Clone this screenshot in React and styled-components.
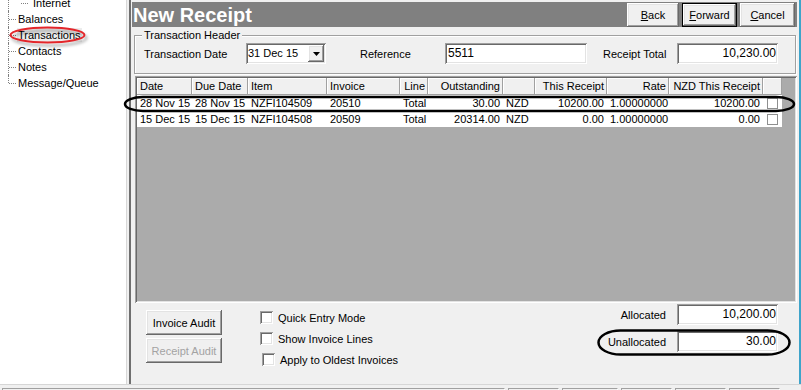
import React from 'react';
import styled, { createGlobalStyle, css } from 'styled-components';

const GlobalStyle = createGlobalStyle`
  html, body { margin: 0; padding: 0; background: #f0f0f0; }
  body {
    font-family: "Liberation Sans", Arial, sans-serif;
    font-size: 11px;
    color: #000;
  }
  *, *::before, *::after { box-sizing: border-box; }
`;

// classic 3d edges
const sunken = css`
  background: #fff;
  box-shadow: inset 1px 1px 0 #a0a0a0, inset -1px -1px 0 #fff,
    inset 2px 2px 0 #696969, inset -2px -2px 0 #e3e3e3;
`;

const raised = css`
  background: #f0f0f0;
  box-shadow: inset -1px -1px 0 #696969, inset 1px 1px 0 #fff,
    inset -2px -2px 0 #a0a0a0, inset 2px 2px 0 #e3e3e3;
`;

const Screen = styled.div`
  position: relative;
  width: 801px;
  height: 390px;
  overflow: hidden;
  display: flex;
  flex-direction: column;
  background: #f0f0f0;
`;

const Workspace = styled.div`
  display: flex;
  height: 384px;
`;

const TreePane = styled.nav`
  width: 127px;
  flex-shrink: 0;
  background: #fff;
  border-right: 1px solid #d8d8d8;
  overflow: hidden;
`;

const TreeList = styled.ul`
  list-style: none;
  margin: -5px 0 0 8px;
  padding: 0;
`;

const TreeNode = styled.li`
  position: relative;
  height: 16px;
  line-height: 16px;
  padding-left: ${p => (p.$child ? 24 : 9)}px;
  white-space: nowrap;
  &::before {
    content: '';
    position: absolute;
    left: 0;
    top: 0;
    height: ${p => (p.$last ? 8 : 16)}px;
    border-left: 1px dotted #808080;
  }
  &::after {
    content: '';
    position: absolute;
    left: ${p => (p.$child ? 13 : 1)}px;
    top: 8px;
    width: 7px;
    border-top: 1px dotted #808080;
  }
`;

const NodeLabel = styled.span`
  padding: 1px 1px;
  background: ${p => (p.$selected ? '#ececec' : 'transparent')};
`;

const Panel = styled.main`
  flex: 1;
  display: flex;
  flex-direction: column;
  margin-left: 2px;
  border-left: 2px solid #6f6f6f;
  border-right: 2px solid #3ea4ca;
  padding-top: 2px;
`;

const TitleBar = styled.header`
  display: flex;
  align-items: flex-end;
  justify-content: space-between;
  height: 25px;
  margin: 0 2px 0 1px;
  background: #808080;
`;

const Title = styled.h1`
  margin: 0;
  align-self: center;
  padding: 2px 0 0 1px;
  font-size: 20px;
  line-height: 23px;
  font-weight: bold;
  color: #fff;
`;

const NavButtons = styled.div`
  display: flex;
  gap: 3px;
  margin-right: 2px;
`;

const WinButton = styled.button`
  width: ${p => p.$w}px;
  height: ${p => p.$h || 24}px;
  padding: 0;
  font-family: inherit;
  font-size: 11px;
  color: ${p => (p.disabled ? '#a3a3a3' : '#000')};
  border: ${p => (p.$default ? '1px solid #000' : 'none')};
  ${raised};
  u { text-decoration: underline; }
`;

const Group = styled.fieldset`
  margin: 2px 3px 0 3px;
  padding: 0 0 9px 0;
  border: 1px solid #a0a0a0;
  box-shadow: inset 1px 1px 0 #fff, 1px 1px 0 #fff;
  min-width: 0;
`;

const GroupLegend = styled.legend`
  margin-left: 7px;
  padding: 0 2px;
  line-height: 13px;
  font-size: 11px;
  background: #f0f0f0;
`;

const HeaderFields = styled.div`
  display: flex;
  align-items: center;
  padding: 1px 0 0 9px;
`;

const FieldLabel = styled.span`
  width: ${p => p.$w}px;
  margin-left: ${p => p.$gap || 0}px;
  flex-shrink: 0;
`;

const Combo = styled.div`
  ${sunken};
  display: flex;
  width: 80px;
  height: 21px;
  padding: 2px;
`;

const ComboText = styled.span`
  flex: 1;
  line-height: 17px;
  font-size: 11px;
`;

const ComboButton = styled.span`
  ${raised};
  width: 16px;
  display: flex;
  align-items: center;
  justify-content: center;
`;

const TextBox = styled.div`
  ${sunken};
  width: ${p => p.$w}px;
  height: 21px;
  padding: 2px 2px 2px 3px;
  font-size: 12px;
  line-height: 17px;
  text-align: ${p => (p.$right ? 'right' : 'left')};
  flex-shrink: 0;
`;

const GridFrame = styled.div`
  margin: 2px 2px 0 4px;
  height: 227px;
  padding: 2px;
  background: #ababab;
  box-shadow: inset 1px 1px 0 #a0a0a0, inset -1px -1px 0 #fff,
    inset 2px 2px 0 #696969, inset -2px -2px 0 #e3e3e3;
`;

const DataGrid = styled.div`
  display: grid;
  grid-template-columns: 55px 56px 79px 73px 28px 75px 32px 72px 62px 94px 19px;
  grid-template-rows: 17px;
  grid-auto-rows: 16px;
  width: max-content;
`;

const HeadCell = styled.div`
  background: #f0f0f0;
  box-shadow: inset -1px -1px 0 #a0a0a0, inset 1px 1px 0 #fff;
  padding: 0 3px 0 3px;
  line-height: 16px;
  text-align: ${p => (p.$right ? 'right' : 'left')};
  white-space: nowrap;
  overflow: hidden;
`;

const Cell = styled.div`
  background: #fff;
  padding: 0 3px;
  line-height: 16px;
  text-align: ${p => (p.$right ? 'right' : 'left')};
  white-space: nowrap;
  overflow: hidden;
`;

const CheckCell = styled.div`
  background: #fff;
  display: flex;
  align-items: center;
  padding-left: 4px;
`;

const RowBox = styled.span`
  width: 11px;
  height: 11px;
  border: 1px solid #8e8f8f;
  background: #fff;
`;

const Footer = styled.div`
  flex: 1;
  display: flex;
  align-items: flex-start;
  padding: 1px 21px 0 15px;
`;

const AuditButtons = styled.div`
  display: flex;
  flex-direction: column;
  gap: 3px;
  margin-top: 6px;
`;

const Options = styled.div`
  display: flex;
  flex-direction: column;
  margin: 3px 0 0 38px;
`;

const Option = styled.label`
  display: flex;
  align-items: center;
  gap: 5px;
  height: 21px;
  padding-left: ${p => p.$shift || 0}px;
`;

const CheckBox = styled.span`
  ${sunken};
  width: 13px;
  height: 13px;
`;

const Totals = styled.div`
  margin-left: auto;
  display: grid;
  grid-template-columns: auto 101px;
  column-gap: 11px;
  row-gap: 6px;
  align-items: center;
  justify-items: end;
`;

const StatusBar = styled.footer`
  display: flex;
  gap: 3px;
  height: 6px;
  padding: 3px 0 0 2px;
  border-top: 1px solid #d6d6d6;
`;

const StatusPane = styled.span`
  width: ${p => p.$w}px;
  border-top: 1px solid #a0a0a0;
  border-left: 1px solid #a0a0a0;
  border-right: 1px solid #fff;
`;

const Annotations = styled.svg`
  position: absolute;
  left: 0;
  top: 0;
  pointer-events: none;
`;

const columns = [
  { key: 'date', label: 'Date' },
  { key: 'due', label: 'Due Date' },
  { key: 'item', label: 'Item' },
  { key: 'invoice', label: 'Invoice' },
  { key: 'line', label: 'Line', right: true },
  { key: 'outstanding', label: 'Outstanding', right: true },
  { key: 'cur', label: '' },
  { key: 'receipt', label: 'This Receipt', right: true },
  { key: 'rate', label: 'Rate', right: true },
  { key: 'nzd', label: 'NZD This Receipt', right: true },
];

const rows = [
  { date: '28 Nov 15', due: '28 Nov 15', item: 'NZFI104509', invoice: '20510', line: 'Total', outstanding: '30.00', cur: 'NZD', receipt: '10200.00', rate: '1.00000000', nzd: '10200.00' },
  { date: '15 Dec 15', due: '15 Dec 15', item: 'NZFI104508', invoice: '20509', line: 'Total', outstanding: '20314.00', cur: 'NZD', receipt: '0.00', rate: '1.00000000', nzd: '0.00' },
];

const treeItems = ['Balances', 'Transactions', 'Contacts', 'Notes', 'Message/Queue'];

const App = () => {
  return (
    <Screen>
      <GlobalStyle />
      <Workspace>
        <TreePane>
          <TreeList>
            <TreeNode $child><NodeLabel>Internet</NodeLabel></TreeNode>
            {treeItems.map((t, i) => (
              <TreeNode key={t} $last={i === treeItems.length - 1}>
                <NodeLabel $selected={t === 'Transactions'}>{t}</NodeLabel>
              </TreeNode>
            ))}
          </TreeList>
        </TreePane>

        <Panel>
          <TitleBar>
            <Title>New Receipt</Title>
            <NavButtons>
              <WinButton $w={52}><u>B</u>ack</WinButton>
              <WinButton $w={55} $default><u>F</u>orward</WinButton>
              <WinButton $w={55}><u>C</u>ancel</WinButton>
            </NavButtons>
          </TitleBar>

          <Group>
            <GroupLegend>Transaction Header</GroupLegend>
            <HeaderFields>
              <FieldLabel $w={102}>Transaction Date</FieldLabel>
              <Combo>
                <ComboText>31 Dec 15</ComboText>
                <ComboButton>
                  <svg width="7" height="4" viewBox="0 0 7 4"><polygon points="0,0 7,0 3.5,4" fill="#000" /></svg>
                </ComboButton>
              </Combo>
              <FieldLabel $w={85} $gap={34}>Reference</FieldLabel>
              <TextBox $w={142}>5511</TextBox>
              <FieldLabel $w={74} $gap={16}>Receipt Total</FieldLabel>
              <TextBox $w={101} $right>10,230.00</TextBox>
            </HeaderFields>
          </Group>

          <GridFrame>
            <DataGrid>
              {columns.map(c => (
                <HeadCell key={c.key} $right={c.right}>{c.label}</HeadCell>
              ))}
              <HeadCell />
              {rows.map(r => (
                <React.Fragment key={r.invoice}>
                  {columns.map(c => (
                    <Cell key={c.key} $right={c.right}>{r[c.key]}</Cell>
                  ))}
                  <CheckCell><RowBox /></CheckCell>
                </React.Fragment>
              ))}
            </DataGrid>
          </GridFrame>

          <Footer>
            <AuditButtons>
              <WinButton $w={76} $h={25}>Invoice Audit</WinButton>
              <WinButton $w={76} $h={25} disabled>Receipt Audit</WinButton>
            </AuditButtons>
            <Options>
              <Option><CheckBox />Quick Entry Mode</Option>
              <Option><CheckBox />Show Invoice Lines</Option>
              <Option $shift={2}><CheckBox />Apply to Oldest Invoices</Option>
            </Options>
            <Totals>
              <span>Allocated</span>
              <TextBox $w={101} $right>10,200.00</TextBox>
              <span>Unallocated</span>
              <TextBox $w={101} $right>30.00</TextBox>
            </Totals>
          </Footer>
        </Panel>
      </Workspace>

      <StatusBar>
        {[503, 51, 56, 51, 51, 51].map((w, i) => (
          <StatusPane key={i} $w={w} />
        ))}
      </StatusBar>

      <Annotations width="801" height="390" viewBox="0 0 801 390">
        <defs>
          <filter id="markShadow" x="-20%" y="-60%" width="140%" height="220%">
            <feDropShadow dx="2" dy="3" stdDeviation="1.5" floodColor="#000" floodOpacity="0.35" />
          </filter>
        </defs>
        <ellipse cx="47.5" cy="35" rx="37" ry="7.5" fill="none" stroke="#e3262b" strokeWidth="2" filter="url(#markShadow)" />
        <rect x="125" y="97" width="669" height="14" rx="18" ry="7" fill="none" stroke="#000" strokeWidth="2.5" />
        <rect x="598.5" y="330.5" width="191" height="24" rx="22" ry="12" fill="none" stroke="#000" strokeWidth="2.5" />
      </Annotations>
    </Screen>
  );
};

export default App;
